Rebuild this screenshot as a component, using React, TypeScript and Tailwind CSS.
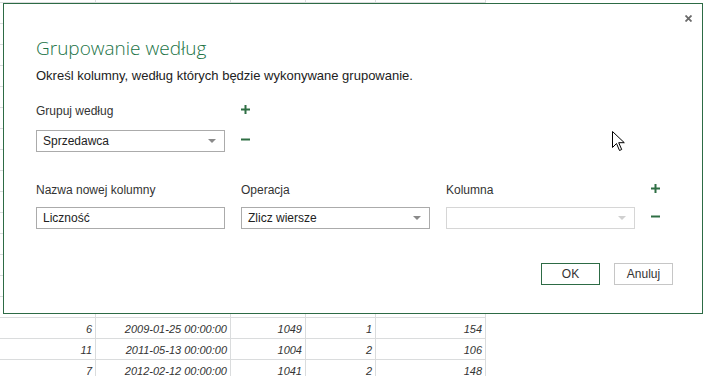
import React from 'react';

const rows: string[][] = [
  ['6', '2009-01-25 00:00:00', '1049', '1', '154'],
  ['11', '2011-05-13 00:00:00', '1004', '2', '106'],
  ['7', '2012-02-12 00:00:00', '1041', '2', '148'],
];

const colWidths = ['w-[96px]', 'w-[135px]', 'w-[75px]', 'w-[70px]', 'w-[110px]'];

const Plus = () => (
  <svg width="9" height="9" viewBox="0 0 9 9" className="block">
    <path d="M4.5 0v9M0 4.5h9" stroke="#2f6f44" strokeWidth="2" />
  </svg>
);

const Minus = () => (
  <svg width="9" height="9" viewBox="0 0 9 9" className="block">
    <path d="M0 4.5h9" stroke="#2f6f44" strokeWidth="2" />
  </svg>
);

const Caret = ({ light }: { light?: boolean }) => (
  <svg width="8" height="4" viewBox="0 0 8 4" className="block">
    <path d="M0 0h8L4 4z" fill={light ? '#d0d0d0' : '#8a8a8a'} />
  </svg>
);

const Field = ({ value, select, disabled }: { value?: string; select?: boolean; disabled?: boolean }) => (
  <div
    className={`h-[22px] w-[189px] border flex items-center justify-between pl-[6px] pr-[8px] text-[12px] text-[#222] ${
      disabled ? 'border-[#d6d6d6]' : 'border-[#ababab]'
    }`}
  >
    <span>{value}</span>
    {select && <Caret light={disabled} />}
  </div>
);

export default function App() {
  return (
    <div className="relative w-[708px] h-[376px] overflow-hidden bg-white" style={{ fontFamily: '"Liberation Sans", Arial, sans-serif' }}>
      {/* spreadsheet behind the dialog */}
      <div className="mt-[-18px] flex flex-col">
        {Array.from({ length: 19 }).map((_, i) => {
          const data = i >= 16 ? rows[i - 16] : null;
          return (
            <div key={i} className="flex">
              {colWidths.map((w, c) => (
                <div
                  key={c}
                  className={`${w} h-[21px] border-b border-r border-[#dadcdd] pt-[1px] pr-[3px] text-right italic text-[11px] leading-[20px] text-[#333]`}
                >
                  {data ? data[c] : ''}
                </div>
              ))}
            </div>
          );
        })}
      </div>

      {/* dialog */}
      <div className="absolute left-[3px] top-[3px] w-[700px] h-[311px] border border-[#2d6b45] bg-white pl-[32px] pr-[29px] flex flex-col">
        <button className="absolute right-[10px] top-[11px] p-0">
          <svg width="7" height="7" viewBox="0 0 7 7" className="block">
            <path d="M0.5 0.5l6 6M6.5 0.5l-6 6" stroke="#6a6a6a" strokeWidth="1.8" />
          </svg>
        </button>

        <div className="mt-[30px] text-[19px] leading-[28px] text-[#217346]" style={{ fontFamily: '"Open Sans", "Liberation Sans", sans-serif', fontWeight: 300 }}>
          Grupowanie według
        </div>
        <div className="mt-[5px] text-[13px] leading-[18px] text-[#222]">
          Określ kolumny, według których będzie wykonywane grupowanie.
        </div>

        <div className="mt-[18px] flex items-center h-[16px]">
          <div className="w-[205px] text-[12px] leading-[16px] text-[#333]">Grupuj według</div>
          <div className="mt-[-3px]">
            <Plus />
          </div>
        </div>
        <div className="mt-[11px] flex items-center">
          <Field value="Sprzedawca" select />
          <div className="ml-[16px] mt-[-4px]">
            <Minus />
          </div>
        </div>

        <div className="mt-[30px] grid grid-cols-[189px_189px_189px_9px] gap-x-[16px] items-center text-[12px] leading-[16px] text-[#333]">
          <div>Nazwa nowej kolumny</div>
          <div>Operacja</div>
          <div>Kolumna</div>
          <div className="mt-[-3px]">
            <Plus />
          </div>
        </div>
        <div className="mt-[9px] grid grid-cols-[189px_189px_189px_9px] gap-x-[16px] items-center">
          <Field value="Liczność" />
          <Field value="Zlicz wiersze" select />
          <Field select disabled />
          <div className="mt-[-4px]">
            <Minus />
          </div>
        </div>

        <div className="mt-auto mb-[28px] flex justify-end gap-[14px]">
          <button className="w-[59px] h-[22px] border border-[#2d6b45] text-[12px] text-[#333] bg-white">OK</button>
          <button className="w-[59px] h-[22px] border border-[#c6c6c6] text-[12px] text-[#333] bg-white">Anuluj</button>
        </div>

        {/* mouse pointer */}
        <svg width="13" height="21" viewBox="0 0 13 21" className="absolute left-[608px] top-[127px]">
          <path d="M0.5 0.5v16l4-4 3 7 2.2-1-3-6.8h5.6z" fill="#fff" stroke="#000" strokeWidth="1" strokeLinejoin="miter" />
        </svg>
      </div>
    </div>
  );
}
